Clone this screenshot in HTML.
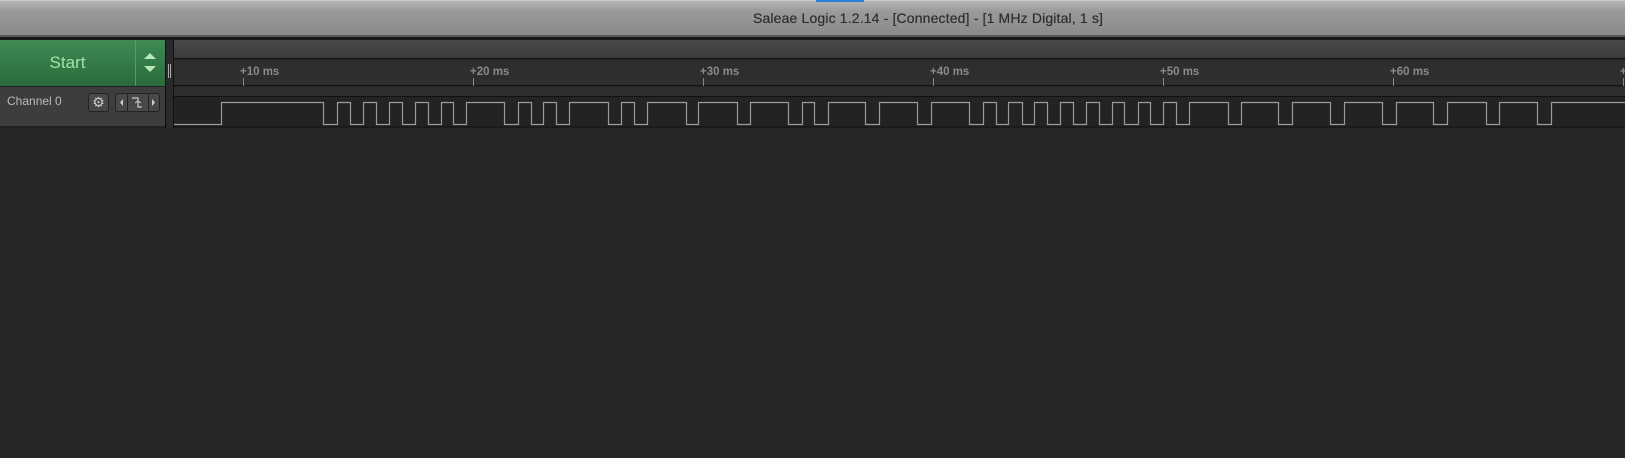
<!DOCTYPE html>
<html><head><meta charset="utf-8"><style>
*{margin:0;padding:0;box-sizing:border-box}
body{width:1625px;height:458px;overflow:hidden;background:#262626;position:relative;font-family:"Liberation Sans",sans-serif}
.a{position:absolute}
</style></head><body>
<div class="a" style="left:0;top:0;width:1625px;height:37px;background:linear-gradient(#b4b4b4,#9a9a9a 30%,#8a8a8a);border-top:1px solid #ccc;border-bottom:2px solid #5a5a5a"></div>
<div class="a" style="left:816px;top:0;width:48px;height:2px;background:#2a7fd8"></div>
<div class="a" style="left:753px;top:10px;font-size:14px;color:#2e2e2e;white-space:nowrap;letter-spacing:0.15px;text-shadow:0 0 0.4px #2e2e2e">Saleae Logic 1.2.14 - [Connected] - [1 MHz Digital, 1 s]</div>
<div class="a" style="left:0;top:37px;width:1625px;height:3px;background:#1a1a1a"></div>
<div class="a" style="left:0;top:40px;width:135px;height:46px;background:linear-gradient(#3f8a55,#2a6a3c);color:#a8e0a8;font-size:17px;text-align:center;line-height:46px">Start</div>
<div class="a" style="left:135px;top:40px;width:30px;height:46px;background:linear-gradient(#3f8a55,#2a6a3c);border-left:1px solid #5a9a6a"></div>
<svg class="a" style="left:135px;top:40px" width="30" height="46"><polygon points="9,19 21,19 15,13" fill="#b8e8b8"/><polygon points="9,26 21,26 15,32" fill="#b8e8b8"/></svg>
<div class="a" style="left:165px;top:40px;width:9px;height:88px;background:#2a2a2a;border-left:1px solid #111;border-right:1px solid #111"></div>
<div class="a" style="left:168px;top:64px;width:1px;height:14px;background:#aaa"></div><div class="a" style="left:170px;top:64px;width:1px;height:14px;background:#aaa"></div>
<div class="a" style="left:174px;top:40px;width:1451px;height:19px;background:linear-gradient(#4a4a4a,#3a3a3a);border-bottom:1px solid #111"></div>
<div class="a" style="left:174px;top:60px;width:1451px;height:26px;background:#2e2e2e;border-bottom:1px solid #111"></div>
<div class="a" style="left:0;top:86px;width:165px;height:42px;background:#3d3d3d;border-top:1px solid #222;border-bottom:2px solid #222"></div>
<div class="a" style="left:7px;top:94px;font-size:12px;color:#bbb">Channel 0</div>
<div class="a" style="left:88px;top:93px;width:21px;height:19px;border:1px solid #222;border-radius:3px;background:#484848;color:#ccc;font-size:14px;text-align:center;line-height:17px">⚙</div>
<div class="a" style="left:115px;top:93px;width:45px;height:19px;border:1px solid #222;border-radius:3px;background:#484848"></div>
<div class="a" style="left:127px;top:94px;width:1px;height:17px;background:#222"></div><div class="a" style="left:148px;top:94px;width:1px;height:17px;background:#222"></div>
<svg class="a" style="left:115px;top:93px" width="45" height="19"><polygon points="8,6 8,13 5,9.5" fill="#ccc"/><polygon points="37,6 37,13 40,9.5" fill="#ccc"/><path d="M17,5 H23 V14 H27" stroke="#ccc" fill="none" stroke-width="1.2"/><path d="M20,10 L23,8 L26,10" stroke="#ccc" fill="none"/></svg>
<div class="a" style="left:174px;top:87px;width:1451px;height:10px;background:#2e2e2e;border-bottom:1px solid #111"></div>
<div class="a" style="left:174px;top:97px;width:1451px;height:31px;background:#232323;border-bottom:2px solid #1a1a1a"></div>
<svg class="a" style="left:0;top:0" width="1625" height="458">
<g stroke="#888" stroke-width="1"><line x1="243.5" y1="78" x2="243.5" y2="86"/><line x1="473.5" y1="78" x2="473.5" y2="86"/><line x1="703.5" y1="78" x2="703.5" y2="86"/><line x1="933.5" y1="78" x2="933.5" y2="86"/><line x1="1163.5" y1="78" x2="1163.5" y2="86"/><line x1="1393.5" y1="78" x2="1393.5" y2="86"/><line x1="1623.5" y1="78" x2="1623.5" y2="86"/></g>
<g fill="#8a8a8a" font-family="Liberation Sans,sans-serif" font-size="11.5" font-weight="bold"><text x="240" y="75">+10 ms</text><text x="470" y="75">+20 ms</text><text x="700" y="75">+30 ms</text><text x="930" y="75">+40 ms</text><text x="1160" y="75">+50 ms</text><text x="1390" y="75">+60 ms</text><text x="1620" y="75">+</text></g>
<path fill="none" stroke="#9a9a9a" stroke-width="1.2" d="M174,124.5 H221.5 V102.5 H323.5 V124.5 H337.5 V102.5 H350.5 V124.5 H363.5 V102.5 H376.5 V124.5 H389.5 V102.5 H402.5 V124.5 H415.5 V102.5 H428.5 V124.5 H441.5 V102.5 H453.5 V124.5 H466.5 V102.5 H504.5 V124.5 H518.5 V102.5 H531.5 V124.5 H543.5 V102.5 H556.5 V124.5 H569.5 V102.5 H608.5 V124.5 H621.5 V102.5 H634.5 V124.5 H647.5 V102.5 H686.5 V124.5 H698.5 V102.5 H737.5 V124.5 H750.5 V102.5 H788.5 V124.5 H802.5 V102.5 H814.5 V124.5 H828.5 V102.5 H865.5 V124.5 H879.5 V102.5 H917.5 V124.5 H931.5 V102.5 H969.5 V124.5 H983.5 V102.5 H996.5 V124.5 H1008.5 V102.5 H1022.5 V124.5 H1034.5 V102.5 H1047.5 V124.5 H1060.5 V102.5 H1073.5 V124.5 H1086.5 V102.5 H1099.5 V124.5 H1112.5 V102.5 H1124.5 V124.5 H1138.5 V102.5 H1150.5 V124.5 H1163.5 V102.5 H1176.5 V124.5 H1189.5 V102.5 H1228.5 V124.5 H1241.5 V102.5 H1278.5 V124.5 H1292.5 V102.5 H1330.5 V124.5 H1344.5 V102.5 H1382.5 V124.5 H1396.5 V102.5 H1433.5 V124.5 H1447.5 V102.5 H1486.5 V124.5 H1499.5 V102.5 H1537.5 V124.5 H1551.5 V102.5 H1625"/>
</svg>
</body></html>
